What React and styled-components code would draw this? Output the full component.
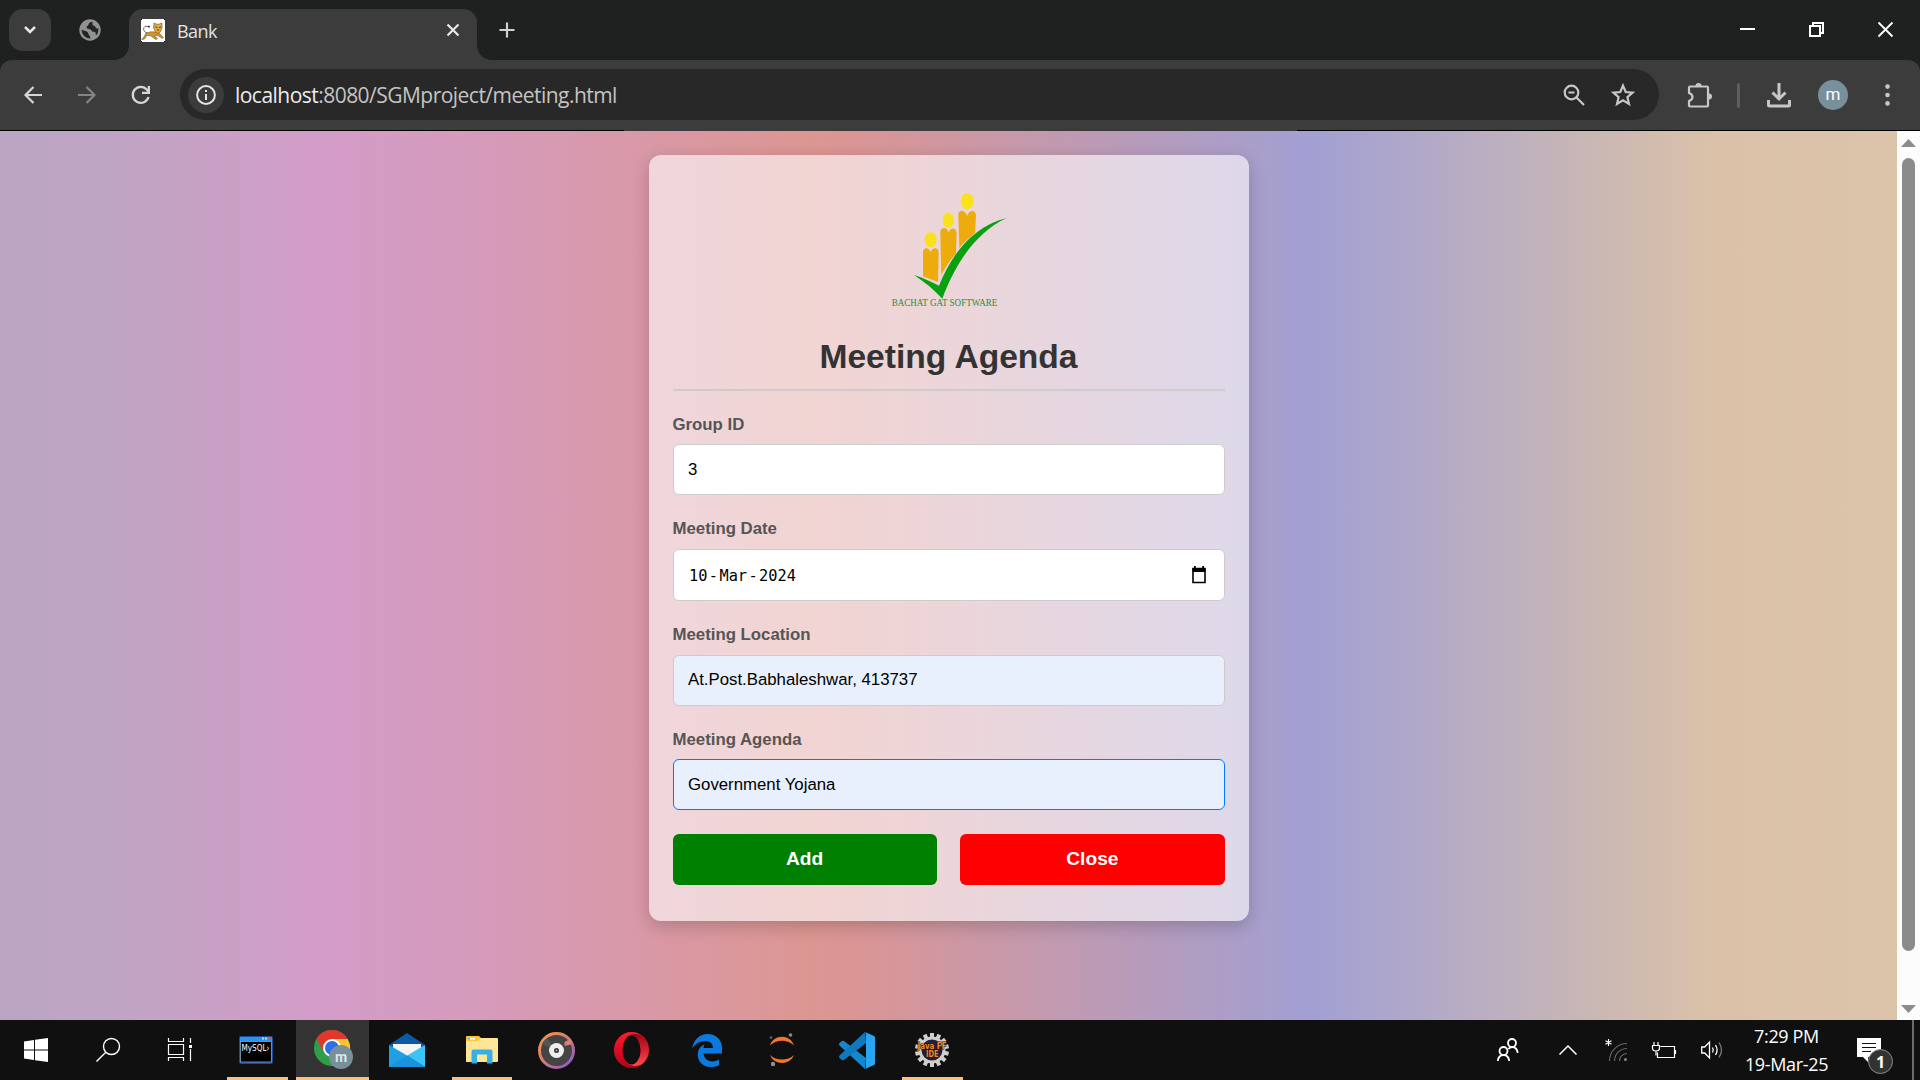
import React from "react";
import styled, { createGlobalStyle } from "styled-components";

const Global = createGlobalStyle`
  * { box-sizing: border-box; }
  html, body { margin: 0; padding: 0; overflow: hidden; background: #101010; }
  button, input { font: inherit; }
  svg { display: block; flex: none; overflow: visible; }
`;

const ui = `"Open Sans", "Noto Sans", sans-serif`;
const arial = `"Liberation Sans", Arial, sans-serif`;

const Screen = styled.div`
  width: 1920px;
  height: 1080px;
  display: flex;
  flex-direction: column;
  overflow: hidden;
  font-family: ${ui};
`;

/* ---------- browser frame ---------- */
const TabStrip = styled.header`
  height: 60px;
  flex: none;
  background: #1f2120;
  display: flex;
  align-items: flex-start;
  padding: 9px 0 0 9px;
`;
const TabSearch = styled.button`
  width: 42px;
  height: 42px;
  padding: 0;
  border: 0;
  border-radius: 14px;
  background: #3c3c3c;
  display: grid;
  place-items: center;
`;
const PinnedTab = styled.div`
  width: 78px;
  height: 42px;
  display: grid;
  place-items: center;
`;
const Tab = styled.div`
  position: relative;
  width: 348px;
  height: 51px;
  background: #3c3c3c;
  border-radius: 14px 14px 0 0;
  display: flex;
  align-items: center;
  padding: 0 16px 9px 12px;
  &::before, &::after {
    content: "";
    position: absolute;
    bottom: 0;
    width: 14px;
    height: 14px;
  }
  &::before {
    left: -14px;
    background: radial-gradient(circle at 0 0, transparent 13.5px, #3c3c3c 14px);
  }
  &::after {
    right: -14px;
    background: radial-gradient(circle at 100% 0, transparent 13.5px, #3c3c3c 14px);
  }
`;
const TabTitle = styled.span`
  flex: 1;
  margin: 1px 0 0 12px;
  font-size: 18px;
  line-height: 24px;
  letter-spacing: -0.55px;
  color: #e3e3e3;
`;
const NewTab = styled.div`
  width: 60px;
  height: 42px;
  display: grid;
  place-items: center;
`;
const WindowButtons = styled.div`
  margin-left: auto;
  display: flex;
  height: 42px;
`;
const WindowButton = styled.div`
  width: 69px;
  height: 41px;
  display: grid;
  place-items: center;
`;

const ToolbarBack = styled.div`
  background: #1f2120;
  flex: none;
`;
const Toolbar = styled.div`
  height: 70px;
  background: #3c3c3c;
  border-radius: 12px 12px 0 0;
  display: flex;
  align-items: center;
  padding: 0 0 0 6px;
`;
const ToolButton = styled.div`
  width: ${(p) => p.$w || 54}px;
  flex: none;
  height: 51px;
  display: grid;
  place-items: center;
`;
const Omnibox = styled.div`
  width: 1479px;
  flex: none;
  height: 51px;
  margin: 0 0 1px 12px;
  border-radius: 26px;
  background: #282828;
  display: flex;
  align-items: center;
  padding: 0 12px 0 8px;
`;
const SiteInfo = styled.div`
  width: 36px;
  height: 36px;
  border-radius: 50%;
  background: #3c3c3c;
  display: grid;
  place-items: center;
`;
const Url = styled.div`
  flex: 1;
  margin-left: 11px;
  font-size: 21px;
  line-height: 30px;
  letter-spacing: -0.53px;
  color: #c4c4c4;
  b { font-weight: 400; color: #ececec; }
`;
const Divider = styled.div`
  width: 3px;
  height: 25px;
  margin: 0 0 0 -3px;
  flex: none;
  border-radius: 2px;
  background: #5e5e5e;
`;
const Avatar = styled.div`
  width: 30px;
  height: 30px;
  flex: none;
  margin-right: 6px;
  border-radius: 50%;
  background: #78909c;
  color: #fff;
  font: 400 17px/28px Roboto, sans-serif;
  text-align: center;
`;
const FrameLine = styled.div`
  height: 1px;
  flex: none;
  background: linear-gradient(to right, #000 624px, #3a3a3a 624px, #3a3a3a 1297px, #000 1297px);
`;

/* ---------- page ---------- */
const Viewport = styled.div`
  flex: 1;
  display: flex;
  min-height: 0;
`;
const Page = styled.main`
  width: 1897px;
  display: flex;
  justify-content: center;
  align-items: flex-start;
  padding-top: 24px;
  background: linear-gradient(
    to right,
    #bba5c4 0, #bfa5c3 110px, #d39cc8 325px, #d69bbb 480px,
    #dc9692 810px, #da9594 855px, #a2a0d3 1312px, #dac1a8 1712px, #dcc4ab 1897px
  );
`;
const Card = styled.section`
  width: 600px;
  height: 766px;
  padding: 34px 24px 0;
  border-radius: 12px;
  background: rgba(255, 255, 255, 0.6);
  box-shadow: 0 5px 18px rgba(0, 0, 0, 0.2);
  font-family: ${arial};
  display: flex;
  flex-direction: column;
`;
const Logo = styled.div`
  display: flex;
  justify-content: center;
  height: 120px;
`;
const Title = styled.h1`
  margin: 28px 0 23px;
  padding-bottom: 12px;
  border-bottom: 2px solid #ccc;
  font-size: 33.6px;
  line-height: 40px;
  font-weight: 700;
  text-align: center;
  color: #333;
`;
const Form = styled.div`
  display: flex;
  flex-direction: column;
  gap: 24px;
`;
const Field = styled.label`
  display: flex;
  flex-direction: column;
  gap: ${(p) => p.$gap || 10}px;
`;
const Caption = styled.span`
  font-size: 16.8px;
  line-height: 20px;
  padding-top: ${(p) => p.$drop || 0}px;
  height: 20px;
  font-weight: 700;
  color: #555;
`;
const Control = styled.div`
  height: ${(p) => p.$h || 51}px;
  border: 1px solid ${(p) => (p.$focus ? "#007bff" : "#ccc")};
  border-radius: 6px;
  background: ${(p) => (p.$filled ? "#e8f0fe" : "#fff")};
  display: flex;
  align-items: center;
  padding: 0 18px ${(p) => p.$lift || 0}px 14.5px;
  font-size: 16.8px;
  color: #000;
`;
const DateText = styled.span`
  flex: 1;
  display: flex;
  gap: 1.4px;
  padding: 1px 0 0 1px;
  font-family: "DejaVu Sans Mono", monospace;
  font-size: 15.3px;
`;
const Actions = styled.div`
  display: flex;
  gap: 23.4px;
`;
const Action = styled.button`
  flex: 1;
  height: 51px;
  padding: 0 0 2px;
  border: 0;
  border-radius: 6px;
  background: ${(p) => p.$color};
  color: #fff;
  font: 700 19.2px ${arial};
`;
const Scrollbar = styled.aside`
  width: 23px;
  background: #fcfcfc;
  display: flex;
  flex-direction: column;
  align-items: center;
  padding: 8px 0 7px;
`;
const Thumb = styled.div`
  width: 13px;
  height: 793px;
  margin: 11px 0 auto;
  border-radius: 7px;
  background: #8b8b8b;
`;

/* ---------- taskbar ---------- */
const Taskbar = styled.footer`
  height: 60px;
  flex: none;
  background: #101010;
  display: flex;
`;
const TaskItem = styled.div`
  width: ${(p) => p.$w || 75}px;
  height: 60px;
  display: grid;
  place-items: center;
  background: ${(p) => (p.$active ? "#333" : "transparent")};
  border-bottom: 3px solid transparent;
  padding: 3px 0 0 ${(p) => p.$indent || 0}px;
  ${(p) => p.$line && `
    background-image: linear-gradient(#ffbf7a, #ffbf7a);
    background-size: ${p.$line}px 3px;
    background-position: left ${p.$lineX || 0}px bottom 0;
    background-origin: border-box;
    background-repeat: no-repeat;
    background-clip: border-box;
  `}
`;
const Tray = styled.div`
  margin-left: auto;
  display: flex;
  align-items: center;
`;
const TrayIcon = styled.div`
  width: ${(p) => p.$w}px;
  display: grid;
  place-items: center;
`;
const Notifications = styled.div`
  width: 79px;
  padding: 13px 0 0 25px;
`;
const Clock = styled.div`
  width: 90px;
  margin-left: 12px;
  padding-right: 1px;
  color: #fff;
  font-size: 18px;
  line-height: 28.5px;
  letter-spacing: -0.35px;
  text-align: center;
  white-space: nowrap;
`;
const ShowDesktop = styled.div`
  width: 8px;
  height: 60px;
  margin-left: 1px;
  border-left: 2px solid #6b6b6b;
`;

const stroke = (color, width = 2) => ({
  fill: "none",
  stroke: color,
  strokeWidth: width,
});

const GlobeIcon = () => (
  <svg width="22" height="22" viewBox="0 0 22 22">
    <circle cx="11" cy="11" r="10.700" fill="#929292" />
    <path d="M13.500 2.800C11.500 3.200 9.800 3.800 9.500 5.500C9.200 7 7.500 7 7.500 8.500C7.800 10.500 12 9.500 12.500 11.500C12.800 13.500 15.500 12.300 16.500 13.500C17 14.500 16.300 15.500 17 16.500C19 14.500 19.600 12 19.300 9.500C18 9.800 17 9.500 16.500 8C16 6.500 13 7 13.500 4.800Z" fill="#232524" />
    <path d="M2.700 10.500C4 12 7 11.500 8.500 13C9.800 14.300 9 15.500 10.500 16.500C11.500 17.300 11 18.500 11.500 19.500C6.500 19.600 2.500 15.500 2.700 10.500Z" fill="#232524" />
  </svg>
);

const Favicon = () => (
  <svg width="24" height="23" viewBox="0 0 24 23">
    <rect width="24" height="23" fill="#fff" />
    <path d="M.7 20.500L3 18l2-4 5-1.200 5 .2 4 2 3.500 3.500-1.500.8-4-2.800-4 .5 3.500 2.500-1.500 1-5-3.500-4-.8L3.500 20z" fill="#d2952f" stroke="#7a5520" strokeWidth=".6" />
    <path d="M13 4l2.200 1.200h3L20.800 4l.2 5-2.200 4.500-2 1-2-1.200L12.700 9z" fill="#e3b03d" stroke="#7a5520" strokeWidth=".7" />
    <path d="M14.500 7.800l2 .8M20 7.800l-2 .8M16 11h2.200" stroke="#3b2a12" strokeWidth=".9" />
    <path d="M6 14C3 13 2 10.500 3 8.500C4 6.800 6 7 7.500 8" {...stroke("#444", 0.8)} />
    <path d="M7 7l1.800 1.200" stroke="#222" strokeWidth="1.300" />
    <path d="M0 0h1v1H0zM0 22h1v1H0zM23 22h1v1h-1zM23 0h1v1h-1z" fill="#111" />
  </svg>
);

const BrandLogo = () => (
  <svg width="120" height="120" viewBox="87 57 360 360">
    <g fill="#f9e21b">
      <ellipse cx="212" cy="209" rx="18" ry="22.500" />
      <ellipse cx="265" cy="150" rx="17.500" ry="22.500" />
      <ellipse cx="321.500" cy="94" rx="19.500" ry="24.500" />
    </g>
    <g fill="#eeab0c">
      <path d="M189 319V246C189 232 206 229 212 247C218 229 236 232 236 247L234 336Z" />
      <path d="M244 315L241 187C241 172 260 168 266 188C272 168 290 174 290 188L288 251C270 270 257 290 244 315Z" />
      <path d="M298 234L295 134C295 119 314 117 321 138C328 117 348 120 348 136L345 189C328 203 312 216 298 234Z" />
    </g>
    <path d="M162 315C190 324 213 335 237 347C275 253 337 170 440 144C347 188 286 280 247 386C222 359 194 336 162 315Z" fill="#0aa010" />
    <text
      x="95"
      y="407"
      textLength="317"
      lengthAdjust="spacingAndGlyphs"
      fontFamily="Liberation Serif, serif"
      fontSize="34"
      fill="#2b8c37"
    >
      BACHAT GAT SOFTWARE
    </text>
  </svg>
);

const CalendarIcon = () => (
  <svg width="14" height="18" viewBox="0 0 14 18">
    <path d="M1 2.500h12v14H1z" {...stroke("#000", 1.600)} />
    <path d="M0.500 2h13v4h-13zM2 0h1.800v3H2zM10.200 0H12v3h-1.800z" fill="#000" />
  </svg>
);

const MySqlIcon = () => (
  <svg width="34" height="28" viewBox="0 0 34 28">
    <rect width="34" height="28" rx="2" fill="#1b4a9c" />
    <path d="M1 1h32v4H1z" fill="#2a94ee" />
    <path d="M23 1.500h2v2h-2zM26 1.500h2v2h-2z" fill="#b9dcfa" />
    <path d="M29.500 1.500h2.500v2.500h-2.500z" fill="#e0563d" />
    <rect x="1.500" y="5.500" width="31" height="20.500" fill="#000" stroke="#8ba3c9" strokeWidth=".8" />
    <text x="2.500" y="14.500" textLength="28" lengthAdjust="spacingAndGlyphs" fontFamily="DejaVu Sans, sans-serif" fontSize="8" fill="#fff">
      MySQL›
    </text>
  </svg>
);

const ChromeIcon = () => (
  <svg width="40" height="40" viewBox="0 0 40 40">
    <circle cx="18" cy="18" r="18" fill="#2f9e4b" />
    <path d="M18 9H33.600A18 18 0 0 1 18 36L25.800 22.500Z" fill="#fcc62c" />
    <path d="M2.400 9A18 18 0 0 1 33.600 9H18L10.200 22.500Z" fill="#e2382c" />
    <circle cx="18" cy="18" r="9" fill="#fff" />
    <circle cx="18" cy="18" r="7" fill="#2a70e8" />
    <circle cx="27" cy="27" r="12" fill="#78909c" />
    <text x="27" y="32" textAnchor="middle" fontFamily="Roboto, sans-serif" fontSize="14" fontWeight="700" fill="#dfe6ea">
      m
    </text>
  </svg>
);

const MailIcon = () => (
  <svg width="36" height="34" viewBox="0 0 36 34">
    <path d="M0 12L18 0l18 12-9 12H9z" fill="#0a5aa8" />
    <path d="M4 11h28v12H4z" fill="#f4f4f4" />
    <path d="M0 12l18 10.500L36 34H0z" fill="#1f9fe4" />
    <path d="M36 12L18 22.500 36 34z" fill="#3bc5f7" />
    <path d="M0 34h36L18 22.500z" fill="#1b92dd" />
  </svg>
);

const ExplorerIcon = () => (
  <svg width="32" height="28" viewBox="0 0 32 28">
    <path d="M0 1q0-1 1-1h12l3 3-2 5H0z" fill="#fcc934" />
    <path d="M0 5h12l3-3h16q1 0 1 1v22q0 1-1 1H0z" fill="#ffe596" />
    <path d="M2 2h7v1.500H2z" fill="#fff" />
    <path d="M2 2h2v1.500H2z" fill="#3ab3ea" />
    <path d="M5.500 27.500v-12q0-2 2-2h17q2 0 2 2v12h-5.500v-9H11v9z" fill="#36b0e6" />
  </svg>
);

const GrooveIcon = () => (
  <svg width="37" height="37" viewBox="0 0 37 37">
    <defs>
      <linearGradient id="groove" x1="0" y1="0" x2="1" y2="1">
        <stop offset="0" stopColor="#ff9640" />
        <stop offset=".5" stopColor="#d5797c" />
        <stop offset="1" stopColor="#7d55d8" />
      </linearGradient>
    </defs>
    <circle cx="18.500" cy="18.500" r="17" fill="#444" stroke="url(#groove)" strokeWidth="3" />
    <path d="M18.500 18.500L9 6A16 16 0 0 0 4 12z" fill="#555" />
    <path d="M26.500 10l6.500-3.500v6L26.500 14z" fill="#d98078" />
    <circle cx="18.500" cy="18.500" r="7.500" fill="#eee" />
    <circle cx="18.500" cy="18.500" r="2.500" fill="#333" />
    <circle cx="18.500" cy="18.500" r="1" fill="#aaa" />
  </svg>
);

const OperaIcon = () => (
  <svg width="35" height="36" viewBox="0 0 35 36">
    <defs>
      <linearGradient id="opera" x1="0" y1="0" x2="0" y2="1">
        <stop offset="0" stopColor="#ff1b2d" />
        <stop offset="1" stopColor="#b4001a" />
      </linearGradient>
      <linearGradient id="operaRight" x1="0" y1="0" x2="0" y2="1">
        <stop offset="0" stopColor="#a10016" />
        <stop offset="1" stopColor="#ff4b4b" />
      </linearGradient>
    </defs>
    <ellipse cx="17.500" cy="18" rx="17.500" ry="18" fill="url(#opera)" />
    <path d="M11.700 6.500C15 2 22 0.500 28.500 4.200A17.500 18 0 0 1 28.500 31.800C22 35.500 15 34 11.700 29.500C20 33 27 28 27 18S20 3 11.700 6.500Z" fill="url(#operaRight)" />
    <ellipse cx="17.500" cy="18" rx="9" ry="14.500" fill="#101010" />
  </svg>
);

const EdgeIcon = () => (
  <svg width="30" height="33" viewBox="0 0 30 33">
    <path
      d="M0 14.500C2 5 8 0 15.500 0C24 0 30 6 30 14V19.500H11.500C12 24.500 16 27.500 20.500 27.500C23 27.500 25 26.700 27 25.500V31C24.500 32.500 21.500 33 18.500 33C10.500 33 5.800 27.500 5.800 20.800C5.800 16 8 12.500 12.500 10.200C11.800 11.500 11.500 13 11.500 14H21C21 10 18.500 7 13.500 7C8 7 3 10 0 14.500Z"
      fill="#0a7ade"
    />
  </svg>
);

const JupyterIcon = () => (
  <svg width="26" height="34" viewBox="0 0 26 34">
    <path d="M1 12.500C4 1.500 21 0 25 12.500C19 6 7 6 1 12.500ZM1 22C5 32.500 21 32.500 25 22C19 28 7 28 1 22Z" fill="#f37726" />
    <circle cx="21.500" cy="2" r="1.800" fill="#8a8a8a" />
    <circle cx="2" cy="4.500" r="1.200" fill="#6a6a6a" />
    <circle cx="4" cy="31" r="2.200" fill="#8f8f8f" />
  </svg>
);

const CodeIcon = () => (
  <svg width="36" height="37" viewBox="0 0 36 37">
    <path d="M26 37L1 14q-2-2 0-3.500L3 9q1-.5 2 0l22 17z" fill="#1488cf" />
    <path d="M26 0L1 23q-2 2 0 3.500L3 28q1 .5 2 0l22-17z" fill="#0f78bf" />
    <path d="M26 0l9 4q1 .5 1 1.500v26q0 1-1 1.500l-9 4q1-1 1-3V3q0-2-1-3z" fill="#2aa5f2" />
  </svg>
);

const teeth = Array.from({ length: 14 }, (_, i) => (i * 360) / 14);
const JavaIcon = () => (
  <svg width="34" height="34" viewBox="0 0 34 34">
    {teeth.map((a) => (
      <rect key={a} x="15" y="0" width="4" height="6" fill="#cfcfcf" transform={`rotate(${a} 17 17)`} />
    ))}
    <circle cx="17" cy="17" r="12" fill="#241f3d" stroke="#cfcfcf" strokeWidth="3" />
    <g fontFamily="DejaVu Sans, sans-serif" fontWeight="700" fill="#f58a1f" stroke="#1c1420" strokeWidth="1" paintOrder="stroke">
      <text x="2.500" y="16" textLength="29" lengthAdjust="spacingAndGlyphs" fontSize="8">Java FF</text>
      <text x="11" y="24" textLength="12.500" lengthAdjust="spacingAndGlyphs" fontSize="8">IDE</text>
    </g>
  </svg>
);

const fields = [
  { label: "Group ID", value: "3", drop: 1 },
  { label: "Meeting Date", date: ["10", "-", "Mar", "-", "2024"], h: 52 },
  { label: "Meeting Location", value: "At.Post.Babhaleshwar, 413737", filled: true, lift: 2 },
  { label: "Meeting Agenda", value: "Government Yojana", filled: true, focus: true, gap: 9 },
];

const grey = "#c7c7c7";

export default function App() {
  return (
    <Screen>
      <Global />
      <TabStrip>
        <TabSearch aria-label="Search tabs">
          <svg width="14" height="10" viewBox="0 0 14 10"><path d="M2 2l5 5 5-5" {...stroke("#e8e8e8", 2.500)} /></svg>
        </TabSearch>
        <PinnedTab><GlobeIcon /></PinnedTab>
        <Tab>
          <Favicon />
          <TabTitle>Bank</TabTitle>
          <svg width="16" height="16" viewBox="0 0 16 16"><path d="M2.500 2.500l11 11M13.500 2.500l-11 11" {...stroke("#e8e8e8", 2.200)} /></svg>
        </Tab>
        <NewTab>
          <svg width="16" height="16" viewBox="0 0 16 16"><path d="M8 0.500v15M0.500 8h15" {...stroke("#d0d0d0", 2.200)} /></svg>
        </NewTab>
        <WindowButtons>
          <WindowButton><svg width="15" height="15" viewBox="0 0 15 15"><path d="M0 7h15" {...stroke("#fff")} /></svg></WindowButton>
          <WindowButton>
            <svg width="15" height="15" viewBox="0 0 15 15"><path d="M1 4h10v10H1zM4 4V1h10v10h-3" {...stroke("#fff")} /></svg>
          </WindowButton>
          <WindowButton><svg width="15" height="15" viewBox="0 0 15 15"><path d="M.5.5l14 14M14.500.5l-14 14" {...stroke("#fff", 1.800)} /></svg></WindowButton>
        </WindowButtons>
      </TabStrip>
      <ToolbarBack>
        <Toolbar>
          <ToolButton>
            <svg width="18" height="18" viewBox="0 0 18 18"><path d="M18 9H2M9.500 1L1.500 9l8 8" {...stroke("#d5d5d5", 2.200)} /></svg>
          </ToolButton>
          <ToolButton>
            <svg width="18" height="18" viewBox="0 0 18 18"><path d="M0 9h16M8.500 1l8 8-8 8" {...stroke("#858585", 2.200)} /></svg>
          </ToolButton>
          <ToolButton>
            <svg width="20" height="20" viewBox="0 0 20 20">
              <path d="M17.500 12A8 8 0 1 1 16 4.800l1.500 2" {...stroke("#d5d5d5", 2.300)} />
              <path d="M19 1v8h-8V6.700h5.700V1z" fill="#d5d5d5" />
            </svg>
          </ToolButton>
          <Omnibox>
            <SiteInfo>
              <svg width="20" height="20" viewBox="0 0 20 20">
                <circle cx="10" cy="10" r="8.900" {...stroke("#e3e3e3", 2)} />
                <path d="M9 9h2v6H9zM9 5h2v2H9z" fill="#e3e3e3" />
              </svg>
            </SiteInfo>
            <Url><b>localhost</b>:8080/SGMproject/meeting.html</Url>
            <ToolButton $w={48}>
              <svg width="22" height="22" viewBox="0 0 22 22">
                <circle cx="8.500" cy="8.500" r="6.800" {...stroke(grey, 2.200)} />
                <path d="M13.500 13.500l7.500 7.500M5.500 8.500h6" {...stroke(grey, 2.200)} />
              </svg>
            </ToolButton>
            <ToolButton $w={49}>
              <svg width="24" height="24" viewBox="0 0 24 24">
                <path d="M12 2.600l2.700 6.400 6.900.6-5.200 4.600 1.600 6.800-6-3.600-6 3.600 1.600-6.800-5.200-4.600 6.900-.6z" {...stroke(grey, 2.200)} />
              </svg>
            </ToolButton>
          </Omnibox>
          <ToolButton $w={81}>
            <svg width="25" height="25" viewBox="0 0 25 25">
              <path d="M2 4.500q0-1 1-1h17q1 0 1 1v18q0 1-1 1H3q-1 0-1-1v-4.500q3.500-1.200 3.500-4T2 10z" {...stroke(grey, 2.200)} />
              <path d="M8.500 3a3 3 0 0 1 6 0zM22 10.500a3 3 0 0 1 0 6z" fill={grey} />
            </svg>
          </ToolButton>
          <Divider />
          <ToolButton $w={78}>
            <svg width="24" height="25" viewBox="0 0 24 25">
              <path d="M12 0v15M5.500 9.500L12 16l6.500-6.500" {...stroke(grey, 3)} />
              <path d="M1.500 17v5q0 1 1 1h19q1 0 1-1v-5" {...stroke(grey, 3)} />
            </svg>
          </ToolButton>
          <Avatar>m</Avatar>
          <ToolButton $w={66}>
            <svg width="5" height="22" viewBox="0 0 5 22">
              <circle cx="2.500" cy="2.600" r="2.300" fill={grey} />
              <circle cx="2.500" cy="11" r="2.300" fill={grey} />
              <circle cx="2.500" cy="19.400" r="2.300" fill={grey} />
            </svg>
          </ToolButton>
        </Toolbar>
      </ToolbarBack>
      <FrameLine />
      <Viewport>
        <Page>
          <Card>
            <Logo><BrandLogo /></Logo>
            <Title>Meeting Agenda</Title>
            <Form>
              {fields.map((f) => (
                <Field key={f.label} $gap={f.gap}>
                  <Caption $drop={f.drop}>{f.label}</Caption>
                  <Control $h={f.h} $filled={f.filled} $focus={f.focus} $lift={f.lift}>
                    {f.date ? (
                      <>
                        <DateText>{f.date.map((d, i) => <span key={i}>{d}</span>)}</DateText>
                        <CalendarIcon />
                      </>
                    ) : f.value}
                  </Control>
                </Field>
              ))}
              <Actions>
                <Action $color="#008000">Add</Action>
                <Action $color="#ff0000">Close</Action>
              </Actions>
            </Form>
          </Card>
        </Page>
        <Scrollbar>
          <svg width="15" height="8" viewBox="0 0 15 8"><path d="M0 8L7.500 0 15 8z" fill="#8b8b8b" /></svg>
          <Thumb />
          <svg width="15" height="8" viewBox="0 0 15 8"><path d="M0 0h15L7.500 8z" fill="#8b8b8b" /></svg>
        </Scrollbar>
      </Viewport>
      <Taskbar>
        <TaskItem $w={72}>
          <svg width="24" height="24" viewBox="0 0 24 24">
            <path d="M0 3.500L10 2v9.500H0zM11 1.800L24 0v11.500H11zM0 12.500h10V22L0 20.500zM11 12.500h13V24l-13-1.800z" fill="#fff" />
          </svg>
        </TaskItem>
        <TaskItem $w={72}>
          <svg width="24" height="24" viewBox="0 0 24 24">
            <circle cx="15.500" cy="8.500" r="8" {...stroke("#fff", 1.400)} />
            <path d="M9.800 14.200L.5 23.500" {...stroke("#fff", 1.400)} />
          </svg>
        </TaskItem>
        <TaskItem $w={72}>
          <svg width="24" height="24" viewBox="0 0 24 24">
            <path d="M.5 0v3.500h15V0M.5 6.500h15v10H.5zM.5 23v-3.500h15V23M22.500 0v5M22.500 11v12" {...stroke("#fff", 1.200)} />
            <path d="M21 7h3v3h-3z" fill="#fff" />
          </svg>
        </TaskItem>
        <TaskItem $w={80} $line={61} $lineX={11}><MySqlIcon /></TaskItem>
        <TaskItem $w={73} $line={73} $active $indent={3}><ChromeIcon /></TaskItem>
        <TaskItem $w={76}><MailIcon /></TaskItem>
        <TaskItem $w={74} $line={60} $lineX={7}><ExplorerIcon /></TaskItem>
        <TaskItem><GrooveIcon /></TaskItem>
        <TaskItem><OperaIcon /></TaskItem>
        <TaskItem><EdgeIcon /></TaskItem>
        <TaskItem><JupyterIcon /></TaskItem>
        <TaskItem><CodeIcon /></TaskItem>
        <TaskItem $line={61} $lineX={8}><JavaIcon /></TaskItem>
        <Tray>
          <TrayIcon $w={60}>
            <svg width="22" height="24" viewBox="0 0 22 24">
              <circle cx="6.500" cy="13" r="4" {...stroke("#fff", 1.800)} />
              <path d="M.8 23c.5-4 2.700-6 5.700-6s5.200 2 5.700 6" {...stroke("#fff", 1.800)} />
              <circle cx="15" cy="5" r="4" {...stroke("#fff", 1.800)} />
              <path d="M11.500 11c1-1.500 2.200-2 3.500-2 3 0 5.200 2 5.700 6" {...stroke("#fff", 1.800)} />
            </svg>
          </TrayIcon>
          <TrayIcon $w={60}>
            <svg width="18" height="10" viewBox="0 0 18 10"><path d="M.5 9.500L9 1l8.500 8.500" {...stroke("#fff", 1.500)} /></svg>
          </TrayIcon>
          <TrayIcon $w={36}>
            <svg width="22" height="22" viewBox="0 0 22 22">
              <path d="M3.500 0v7M.5 1.700l6 3.600M6.500 1.700l-6 3.600" {...stroke("#fff", 1.100)} />
              <path d="M4.500 22A17.500 17.500 0 0 1 22 4.500M9.500 22A12.500 12.500 0 0 1 22 9.500M14.500 22A7.500 7.500 0 0 1 22 14.500" {...stroke("#666", 1.200)} />
              <circle cx="20.500" cy="20.500" r="1.500" fill="#888" />
            </svg>
          </TrayIcon>
          <TrayIcon $w={60}>
            <svg width="24" height="17" viewBox="0 0 24 17">
              <path d="M8.500 4.500h14v11h-17v-5M23.500 8v4" {...stroke("#fff", 1.200)} />
              <path d="M2 0v3M6 0v3M.5 3.500h7v2.500q0 3-3.500 3T.5 6zM4 9v4.500" {...stroke("#fff", 1.200)} />
            </svg>
          </TrayIcon>
          <TrayIcon $w={36}>
            <svg width="23" height="18" viewBox="0 0 23 18">
              <path d="M.7 6h3l4.800-5v16l-4.800-5h-3z" {...stroke("#fff", 1.300)} />
              <path d="M11.500 6.500q1.500 2.500 0 5M14.500 4q3.200 5 0 10" {...stroke("#fff", 1.300)} />
              <path d="M18 1.500q5 7.500 0 15" {...stroke("#777", 1.300)} />
            </svg>
          </TrayIcon>
          <Clock>7:29 PM<br />19-Mar-25</Clock>
          <Notifications>
            <svg width="37" height="37" viewBox="0 0 37 37">
              <path d="M0 0h24v19H11v5l-5-5H0z" fill="#fff" />
              <path d="M5 5.500h14M5 9.500h14M5 13.500h9" {...stroke("#101010", 1.200)} />
              <circle cx="23.500" cy="23.500" r="12" fill="#333" stroke="#8a8a8a" strokeWidth="1" />
              <text x="23.500" y="29.500" textAnchor="middle" fontFamily="Open Sans, sans-serif" fontSize="16" fontWeight="700" fill="#fff">1</text>
            </svg>
          </Notifications>
          <ShowDesktop />
        </Tray>
      </Taskbar>
    </Screen>
  );
}
